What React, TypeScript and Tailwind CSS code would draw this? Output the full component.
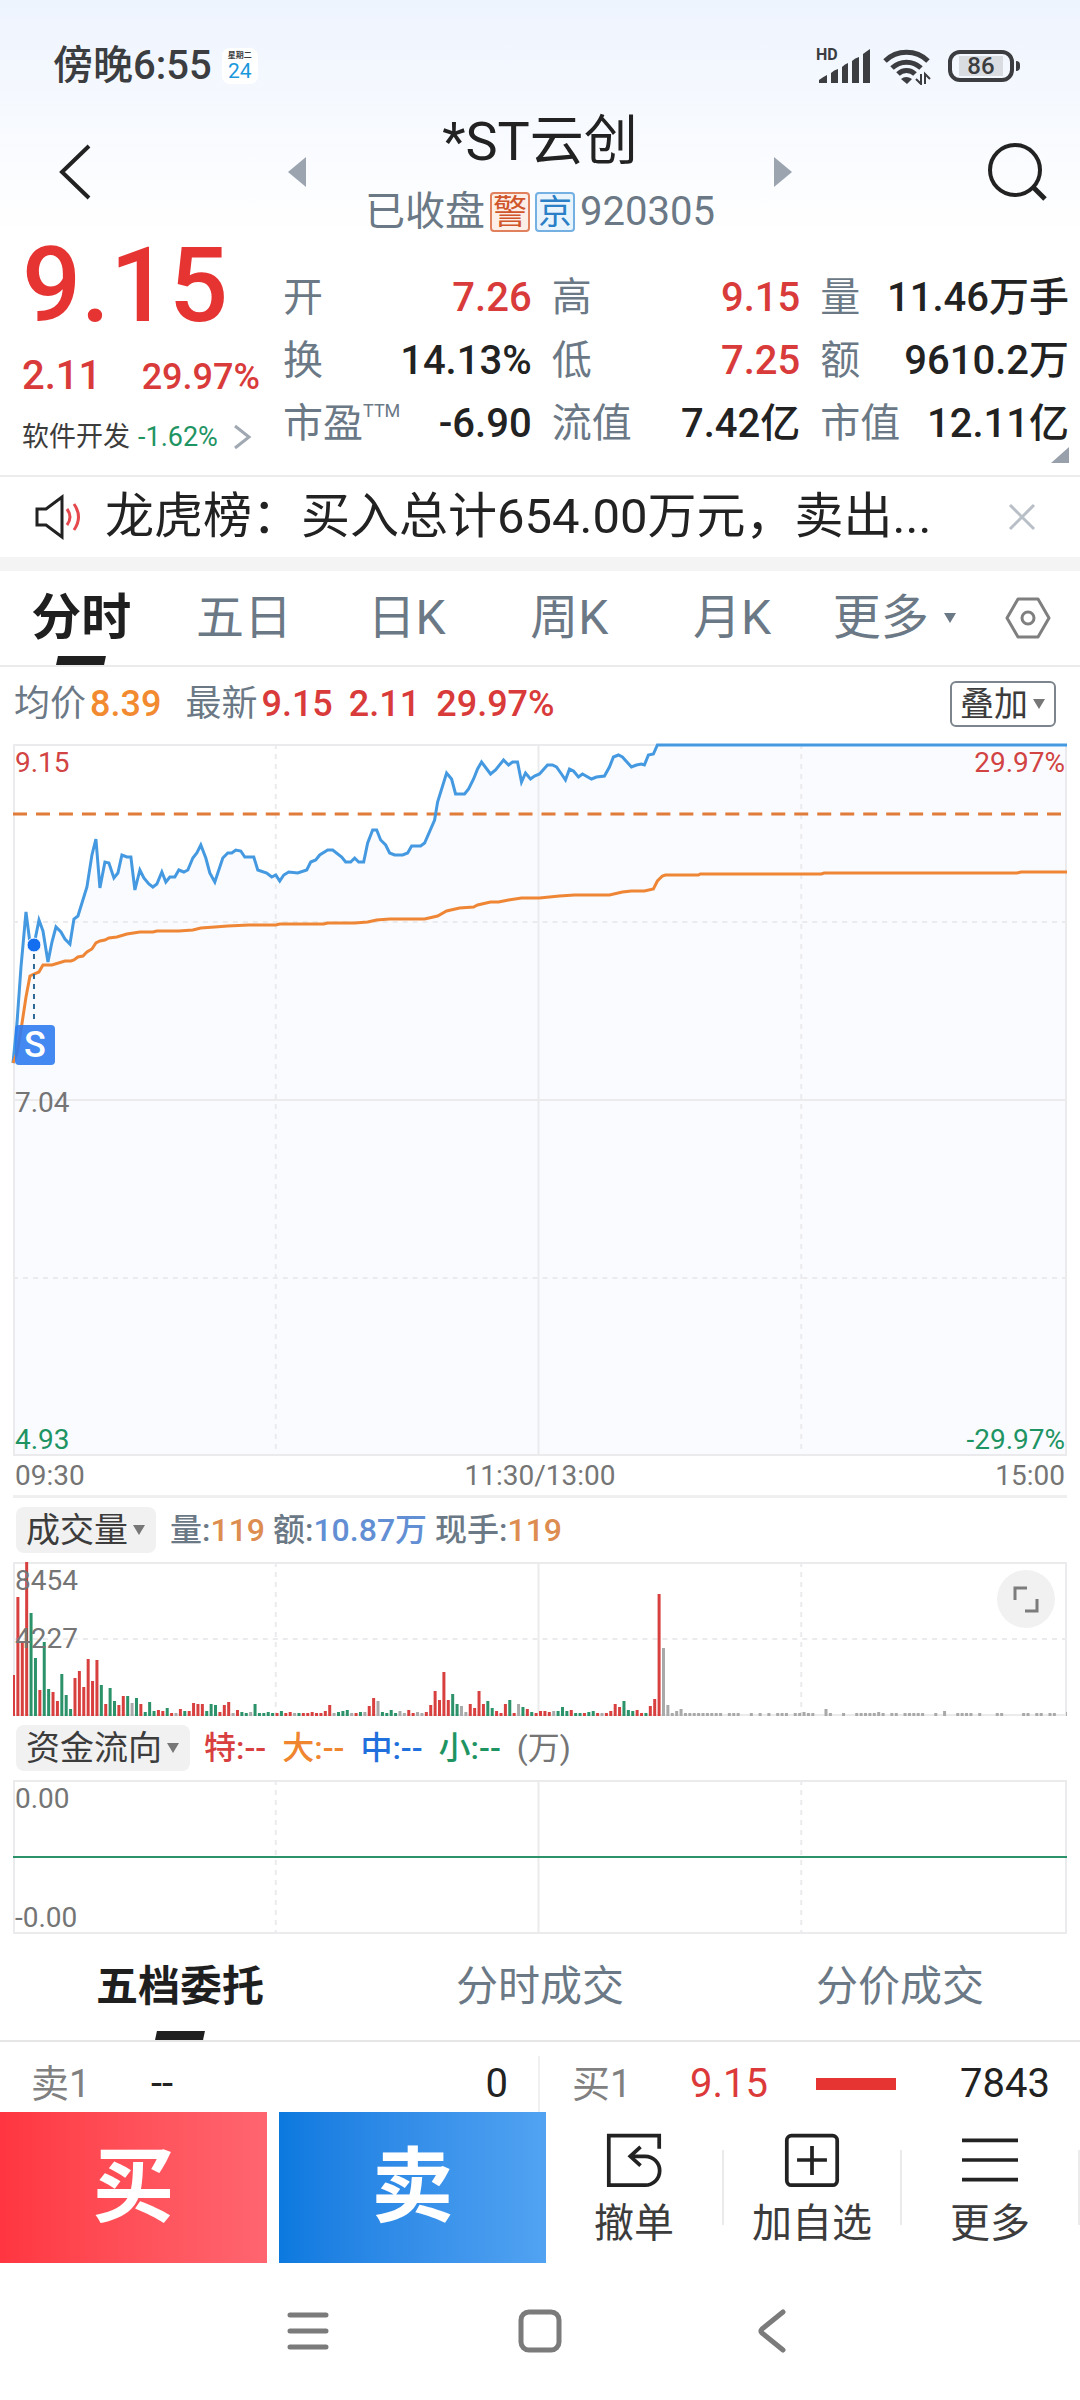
import type { ReactNode } from "react";
import clsx from "clsx";

interface Stat {
  label: string;
  note?: string;
  value: string;
  up?: boolean;
}

const stats: Stat[] = [
  { label: "开", value: "7.26", up: true },
  { label: "高", value: "9.15", up: true },
  { label: "量", value: "11.46万手" },
  { label: "换", value: "14.13%" },
  { label: "低", value: "7.25", up: true },
  { label: "额", value: "9610.2万" },
  { label: "市盈", note: "TTM", value: "-6.90" },
  { label: "流值", value: "7.42亿" },
  { label: "市值", value: "12.11亿" },
];

const periods = ["分时", "五日", "日K", "周K", "月K"];
const detailTabs = ["五档委托", "分时成交", "分价成交"];

// Chart space is 1055 x 712, one minute is about 4.4 wide
const CHART_W = 1055;

const priceLine =
  "0,319 4,279 8,223 13,168 17,199 21,201 26,176 30,187 35,218 39,198 43,183 48,188 52,195 57,200 61,175 65,172 74,143 79,111 83,95 87,144 92,118 96,119 101,134 105,129 109,111 114,113 118,113 122,146 127,126 131,134 136,140 140,143 144,140 149,128 153,138 157,133 162,133 166,126 171,128 175,126 180,114 184,109 188,101 193,114 197,129 202,138 210,114 215,109 219,109 223,106 228,107 232,113 241,113 245,126 254,129 259,133 263,131 267,137 271,131 276,128 285,129 294,126 298,118 303,116 307,111 315,106 320,106 329,113 333,118 338,118 342,114 346,118 351,118 355,99 360,86 364,86 368,96 373,101 377,109 382,111 390,111 395,109 399,102 408,102 412,99 422,76 425,58 434,29 439,35 443,50 452,50 456,45 461,35 465,25 469,18 478,30 483,26 491,16 496,21 500,18 505,18 509,38 513,29 518,35 522,32 527,30 535,21 540,21 544,23 549,30 553,36 557,25 561,27 566,33 570,30 579,35 584,33 592,32 597,23 601,13 606,11 610,13 619,23 624,21 629,20 632,21 636,11 641,10 645,1 1055,1";

const averageLine =
  "0,319 4,309 8,286 13,253 17,232 21,230 26,228 30,221 39,221 52,217 58,217 61,216 65,213 70,212 74,208 79,205 83,199 87,197 92,196 96,194 104,193 114,190 127,188 140,188 144,187 166,187 180,186 188,184 202,183 215,182 236,181 263,181 267,180 311,180 315,179 342,179 355,178 364,176 377,175 412,175 425,172 434,167 447,164 461,163 465,161 478,158 486,158 496,156 509,154 527,154 547,152 562,151 597,151 610,148 619,147 632,147 641,145 645,137 650,132 653,131 686,131 688,130 809,130 812,129 1005,129 1009,128 1055,128";

// One entry a minute: colour (r rise, g fall, x flat) and bar height
const morningVolume =
  "r41 r119 r75 r155 g103 g58 r26 g74 g27 r24 r15 g42 g21 g7 r38 r45 r29 r57 r35 r56 g31 r12 g28 g15 r11 r20 g20 x13 g18 r12 g4 g14 g5 r6 r5 g8 r3 x3 r7 g5 r5 r13 r12 r12 g5 g12 g11 r4 r11 r14 x3 r6 g4 g3 x4 g12 g3 g3 g4 g3 r3 g5 r3 r4 x3 g3 r3 r3 r4 r3 r3 r5 r11 x3 g4 g5 g6 x3 r3 g4 x4 r10 r18 x15 g4 g3 g6 g3 x5 x3 r6 r3 x4 x3 r4 r11 r25 r16 r44 r16 g22 g12 x10 x4 r12 r8 r25 r12 g15 g8 r5 r3 r12 g16 r3 x12 g9 r7 g4 r3";
const afternoonVolume =
  "r5 r5 r4 x5 g5 g9 g5 r6 g3 g3 r3 g4 g5 r3 x3 r3 r5 r12 r9 g15 g6 g5 r6 r3 g3 r10 r17 r122 x68 x11 x3 x5 x7 x3 x3 x3 x3 x3 x3 x3 x3 x3";
// Trades after the limit price was reached
const lateVolume: [number, number][] = [
  [163, 3], [164, 3], [165, 3], [168, 3], [170, 3], [172, 3], [174, 3], [175, 3], [176, 3], [178, 3],
  [179, 3], [180, 4], [181, 3], [182, 3], [185, 7], [186, 3], [189, 3], [192, 3], [193, 3], [194, 3],
  [195, 3], [196, 3], [197, 4], [198, 3], [200, 3], [201, 3], [203, 3], [204, 3], [205, 3], [206, 3],
  [207, 3], [210, 3], [212, 5], [215, 3], [216, 3], [217, 3], [218, 3], [220, 3], [224, 3], [225, 3],
  [230, 3], [231, 3], [233, 3], [234, 3], [236, 3], [237, 3], [240, 4],
];

const barColors: Record<string, string> = { r: "#d8403f", g: "#2b9269", x: "#a9a9a9" };

const volumeBars = [
  ...`${morningVolume} ${afternoonVolume}`.split(" ").map((entry, i) => ({
    minute: i,
    color: barColors[entry[0]],
    height: Number(entry.slice(1)),
  })),
  ...lateVolume.map(([minute, height]) => ({ minute, color: barColors.x, height })),
];

function Caret({ className }: { className?: string }) {
  return (
    <svg viewBox="0 0 14 12" className={clsx("h-3 w-3.5 shrink-0", className)} aria-hidden="true">
      <path d="M1 1h12L7 11z" fill="currentColor" />
    </svg>
  );
}

function Grid({ height, rows = [] }: { height: number; rows?: number[] }) {
  return (
    <g stroke="#ebebee" strokeWidth="2" fill="none">
      <path d={`M0 1H${CHART_W}M0 ${height - 1}H${CHART_W}M1 0V${height}M526 0V${height}M1054 0V${height}`} />
      <path d={`M263 0V${height}M789 0V${height}`} strokeDasharray="5 5" />
      {rows.map((y) => (
        <path key={y} d={`M0 ${y}H${CHART_W}`} strokeDasharray="5 5" />
      ))}
    </g>
  );
}

function StatusBar() {
  return (
    <div className="flex items-center justify-between pt-11 pr-[60px] pl-[53px] text-[#3b3d40]">
      <div className="flex items-center gap-2.5">
        <span className="text-[40px] leading-[44px] font-medium">傍晚6:55</span>
        <span className="flex h-9 w-9 flex-col items-center rounded-lg bg-white pt-1">
          <span className="text-[8px] leading-[8px] font-bold">星期二</span>
          <span className="text-[21px] leading-[22px] text-[#1a98dc]">24</span>
        </span>
      </div>
      <div className="flex items-center gap-3">
        <svg viewBox="0 0 54 36" className="h-9 w-[54px] overflow-visible" aria-label="HD signal">
          <text x="0" y="12" fontSize="16" fontWeight="700" fill="currentColor">
            HD
          </text>
          <path
            d="M3 32q4-3 8-5v8H3zM15 25q3-3 7-4v14h-7zM26 19q3-3 6-4v20h-6zM36 13q3-3 7-4v26h-7zM47 6q4-3 7-5v34h-7z"
            fill="currentColor"
          />
        </svg>
        <svg viewBox="0 0 50 38" className="h-[38px] w-[50px]" fill="none" stroke="currentColor" aria-label="Wi-Fi">
          <path d="M3 14a31 31 0 0 1 43 0M10 21a21 21 0 0 1 29 0M16 27a12 12 0 0 1 17 0" strokeWidth="5" />
          <path d="M19 32q5-4 11 0l-5 5z" fill="currentColor" stroke="none" />
          <path d="M39 27v10l-5-5M43 37V27l5 5" strokeWidth="2" />
        </svg>
        <div className="ml-1 flex items-center gap-0.5">
          <span className="flex h-8 w-[66px] items-center justify-center rounded-xl border-4 border-current">
            <span className="w-11 bg-[#d9dce1] text-center text-[24px] leading-5 font-medium">86</span>
          </span>
          <span className="h-2.5 w-1 rounded-r bg-current" />
        </div>
      </div>
    </div>
  );
}

function TitleBar() {
  return (
    <header className="flex items-center justify-between pt-6 pr-8 pl-14">
      <button aria-label="返回" className="w-20">
        <svg viewBox="0 0 36 56" className="h-14 w-9" fill="none" stroke="#222" strokeWidth="4">
          <path d="M33 2 6 28l27 26" />
        </svg>
      </button>
      <div className="flex w-[504px] items-center justify-between">
        <button aria-label="上一只">
          <svg viewBox="0 0 18 30" className="h-[30px] w-[18px]">
            <path d="M18 0v30L0 15z" fill="#9ba4af" />
          </svg>
        </button>
        <div className="text-center">
          <h1 className="text-[54px] leading-[60px] text-[#222]">*ST云创</h1>
          <div className="mt-5 flex items-center justify-center gap-[5px] text-[40px] leading-10 text-[#6b7885]">
            <span>已收盘</span>
            <span className="flex h-10 w-10 items-center justify-center rounded border-2 border-[#e0805c] bg-[#fdeee8] text-[34px] leading-9 text-[#d0552b]">
              警
            </span>
            <span className="flex h-10 w-10 items-center justify-center rounded border-2 border-[#74b0e2] bg-[#e9f4fd] text-[34px] leading-9 text-[#2a7fc6]">
              京
            </span>
            <span>920305</span>
          </div>
        </div>
        <button aria-label="下一只">
          <svg viewBox="0 0 18 30" className="h-[30px] w-[18px]">
            <path d="M0 0v30l18-15z" fill="#9ba4af" />
          </svg>
        </button>
      </div>
      <button aria-label="搜索" className="ml-6 flex w-20 justify-end">
        <svg viewBox="0 0 60 60" className="h-[60px] w-[60px]" fill="none" stroke="#222" strokeWidth="4">
          <circle cx="27" cy="28" r="25" />
          <path d="m45 45 12 12" strokeWidth="5" />
        </svg>
      </button>
    </header>
  );
}

function Quote() {
  return (
    <section className="relative flex pr-[11px] pb-5 pl-[22px]">
      <div className="w-[261px] shrink-0">
        <p className="text-[104px] leading-[108px] font-medium text-[#e63433]">9.15</p>
        <p className="mt-3.5 flex w-[238px] items-baseline justify-between text-[40px] leading-[44px] font-medium text-[#d93a3a]">
          <span>2.11</span>
          <span className="text-[36px]">29.97%</span>
        </p>
        <a href="#industry" className="mt-[22px] flex items-center text-[27px] leading-8 whitespace-nowrap text-[#3c3c3c]">
          软件开发
          <span className="ml-2 text-[#1f9463]">-1.62%</span>
          <svg viewBox="0 0 20 26" className="ml-3.5 h-[26px] w-5" fill="none" stroke="#a0a8b2" strokeWidth="3">
            <path d="m3 2 14 11L3 24" />
          </svg>
        </a>
      </div>
      <dl className="grid flex-1 grid-cols-3 gap-x-5 pt-[34px] text-[40px] leading-[63px]">
        {stats.map((stat) => (
          <div key={stat.label} className="flex justify-between whitespace-nowrap">
            <dt className="flex text-[#6b7885]">
              {stat.label}
              {stat.note && <span className="text-[18px] leading-[38px]">{stat.note}</span>}
            </dt>
            <dd className={clsx("font-medium", stat.up ? "text-[#d93a3a]" : "text-[#222]")}>{stat.value}</dd>
          </div>
        ))}
      </dl>
      <svg viewBox="0 0 18 16" className="absolute right-[11px] bottom-3 h-4 w-[18px]" aria-hidden="true">
        <path d="M18 0v16H0z" fill="#98a1ab" />
      </svg>
    </section>
  );
}

function Notice() {
  return (
    <div className="flex items-center border-t-2 border-[#ececec] py-[15px] pr-11 pl-[35px]">
      <svg viewBox="0 0 48 46" className="h-[46px] w-12 shrink-0" fill="none" strokeWidth="3">
        <path d="M2 15h9L27 3v40L11 31H2z" stroke="#222" />
        <path d="M32 15q6 8 0 16M39 10q9 13 0 26" stroke="#e5484d" />
      </svg>
      <p className="ml-[22px] flex-1 text-[49px] leading-[50px] whitespace-nowrap text-[#222]">
        龙虎榜：买入总计654.00万元，卖出...
      </p>
      <button aria-label="关闭">
        <svg viewBox="0 0 28 28" className="h-7 w-7" stroke="#b9bfc6" strokeWidth="3">
          <path d="m2 2 24 24M26 2 2 26" />
        </svg>
      </button>
    </div>
  );
}

function PeriodTabs() {
  return (
    <nav className="flex items-center border-b-2 border-[#ebebeb] pr-2.5 text-[48px] leading-[94px] text-[#6b7885]">
      {periods.map((period, i) => (
        <button
          key={period}
          className={clsx("relative flex-1 text-center", i === 0 && "text-[50px] font-bold text-[#1f1f1f]")}
        >
          {period}
          {i === 0 && <Underline />}
        </button>
      ))}
      <button className="flex flex-1 items-center justify-center gap-3.5 pr-2.5">
        更多
        <Caret />
      </button>
      <button aria-label="设置" className="flex w-[84px] justify-center">
        <svg viewBox="0 0 46 42" className="h-[42px] w-[46px]" fill="none" stroke="#7f7f7f" strokeWidth="3">
          <path d="M13 2h20l11 19-11 19H13L2 21z" strokeLinejoin="round" />
          <circle cx="23" cy="21" r="6" />
        </svg>
      </button>
    </nav>
  );
}

function Underline() {
  return (
    <span className="absolute bottom-0 left-1/2 h-[9px] w-12 -translate-x-1/2 -skew-x-12 bg-[#1f1f1f]" />
  );
}

function PriceSummary() {
  return (
    <div className="flex items-center justify-between pt-3.5 pr-6 pb-[17px] pl-3.5 text-[36px] leading-[46px]">
      <p className="flex text-[#6b7885]">
        均价
        <span className="ml-1 font-medium text-[#f28a30]">8.39</span>
        <span className="ml-6">最新</span>
        <span className="ml-1 font-medium text-[#d93a3a]">9.15</span>
        <span className="ml-4 font-medium text-[#d93a3a]">2.11</span>
        <span className="ml-4 font-medium text-[#d93a3a]">29.97%</span>
      </p>
      <button className="flex items-center gap-1 rounded-md border-2 border-[#7c858d] px-2 text-[34px] leading-[42px] text-[#3c3c3c]">
        叠加
        <Caret className="text-[#777]" />
      </button>
    </div>
  );
}

function PriceChart() {
  return (
    <div className="relative mx-[13px] text-[28px] leading-8 text-[#757575]">
      <svg viewBox={`0 0 ${CHART_W} 712`} preserveAspectRatio="none" className="h-[712px] w-full overflow-visible">
        <polygon points={`0,712 ${priceLine} 1055,712`} fill="#f9fbff" />
        <Grid height={712} rows={[178, 534]} />
        <path d="M0 356H1055" stroke="#ebebee" strokeWidth="2" />
        <path d="M0 70H1055" stroke="#e07b39" strokeWidth="3" strokeDasharray="14 9" />
        <polyline points={priceLine} fill="none" stroke="#4499e0" strokeWidth="3" />
        <polyline points={averageLine} fill="none" stroke="#ee8636" strokeWidth="3" />
        <circle cx="21" cy="201" r="7" fill="#146ff0" stroke="#fff" strokeWidth="1" />
        <path d="M21 210V276" stroke="#2f6a96" strokeWidth="2" strokeDasharray="5 5" />
      </svg>
      <span className="absolute top-[281px] left-0.5 flex h-10 w-10 items-center justify-center rounded bg-[#2f7cf0]/90 text-[36px] font-medium text-white">
        S
      </span>
      <span className="absolute top-[3px] left-0.5 text-[#d24343]">9.15</span>
      <span className="absolute top-[3px] right-0.5 text-[#d24343]">29.97%</span>
      <span className="absolute top-[343px] left-0.5">7.04</span>
      <span className="absolute bottom-0 left-0.5 text-[#1f9463]">4.93</span>
      <span className="absolute right-0.5 bottom-0 text-[#1f9463]">-29.97%</span>
    </div>
  );
}

function TimeAxis() {
  return (
    <div className="mx-[13px] grid grid-cols-3 border-b-[3px] border-[#efefef] px-0.5 text-[28px] leading-[39px] text-[#757575]">
      <span>09:30</span>
      <span className="text-center">11:30/13:00</span>
      <span className="text-right">15:00</span>
    </div>
  );
}

function IndicatorBar({ name, children }: { name: string; children: ReactNode }) {
  return (
    <div className="flex items-center px-4 py-[9px] text-[32px] leading-[46px] font-medium">
      <button className="mr-3.5 flex items-center gap-1 rounded-lg bg-[#f1f1f1] px-2.5 text-[34px] font-normal text-[#3c3c3c]">
        {name}
        <Caret className="text-[#777]" />
      </button>
      {children}
    </div>
  );
}

function VolumeChart() {
  return (
    <div className="relative mx-[13px] text-[28px] leading-8 text-[#757575]">
      <svg viewBox={`0 0 ${CHART_W} 154`} preserveAspectRatio="none" className="h-[154px] w-full">
        <Grid height={154} rows={[77]} />
        {volumeBars.map((bar) => (
          <rect
            key={bar.minute}
            x={bar.minute * 4.396 - 1}
            y={154 - bar.height}
            width="3"
            height={bar.height}
            fill={bar.color}
          />
        ))}
      </svg>
      <span className="absolute top-[3px] left-0.5">8454</span>
      <span className="absolute top-[61px] left-0.5">4227</span>
      <button
        aria-label="全屏"
        className="absolute top-2 right-3 flex h-[58px] w-[58px] items-center justify-center rounded-full bg-[#f1f1f1]"
      >
        <svg viewBox="0 0 28 28" className="h-7 w-7" fill="none" stroke="#7c7c7c" strokeWidth="3">
          <path d="M3 15V3h12M25 14v12H13" />
        </svg>
      </button>
    </div>
  );
}

function FundChart() {
  return (
    <div className="relative mx-[13px] text-[28px] leading-8 text-[#757575]">
      <svg viewBox={`0 0 ${CHART_W} 154`} preserveAspectRatio="none" className="h-[154px] w-full">
        <Grid height={154} />
        <path d="M0 77H1055" stroke="#2b9269" strokeWidth="2" />
      </svg>
      <span className="absolute top-[3px] left-0.5">0.00</span>
      <span className="absolute bottom-0 left-0.5">-0.00</span>
    </div>
  );
}

function DetailTabs() {
  return (
    <nav className="flex border-b-2 border-[#e6e6e6] text-[42px] leading-[106px] text-[#6b7885]">
      {detailTabs.map((tab, i) => (
        <button key={tab} className={clsx("relative flex-1 text-center", i === 0 && "font-bold text-[#1f1f1f]")}>
          {tab}
          {i === 0 && <Underline />}
        </button>
      ))}
    </nav>
  );
}

function OrderBook() {
  return (
    <div className="grid grid-cols-2 pt-3.5 text-[40px] leading-[56px] text-[#222]">
      <div className="flex border-r-2 border-[#f0f0f0] pr-[30px] pl-[31px]">
        <span className="w-[120px] text-[38px] text-[#808080]">卖1</span>
        <span>--</span>
        <span className="ml-auto">0</span>
      </div>
      <div className="flex items-center pr-[30px] pl-8">
        <span className="w-[118px] text-[38px] text-[#808080]">买1</span>
        <span className="text-[#dc3a3a]">9.15</span>
        <span className="ml-12 h-3 w-20 bg-[#e63433]" />
        <span className="ml-auto">7843</span>
      </div>
    </div>
  );
}

function ActionButton({ label, children }: { label: string; children: ReactNode }) {
  return (
    <button className="flex flex-1 flex-col items-center gap-2 pt-2 text-[40px] leading-[56px] text-[#3c3c3c]">
      <svg viewBox="0 0 60 60" className="h-14 w-14" fill="none" stroke="#222" strokeWidth="4">
        {children}
      </svg>
      {label}
    </button>
  );
}

function ActionBar() {
  return (
    <div className="flex text-[#222]">
      <button className="h-[151px] w-[267px] bg-linear-to-r from-[#ff3540] to-[#ff6570] text-[82px] font-bold text-white">
        买
      </button>
      <button className="ml-3 h-[151px] w-[267px] bg-linear-to-r from-[#0a79df] to-[#51a3f2] text-[82px] font-bold text-white">
        卖
      </button>
      <div className="flex flex-1 items-center">
        <ActionButton label="撤单">
          <path d="M57 18V4H3v53h39a15 15 0 0 0 0-31H27" />
          <path d="m37 16-11 10 11 10" />
        </ActionButton>
        <span className="h-[75px] w-0.5 bg-[#ebebeb]" />
        <ActionButton label="加自选">
          <rect x="3" y="4" width="54" height="53" rx="5" />
          <path d="M30 15v31M14 30h32" />
        </ActionButton>
        <span className="h-[75px] w-0.5 bg-[#ebebeb]" />
        <ActionButton label="更多">
          <path d="M0 9h60M0 30h60M0 51h60" />
        </ActionButton>
        <span className="h-[75px] w-0.5 bg-[#ebebeb]" />
      </div>
    </div>
  );
}

function SystemNav() {
  return (
    <div className="flex items-center justify-center gap-[188px] py-11">
      <button aria-label="最近任务">
        <svg viewBox="0 0 44 48" className="h-12 w-11" stroke="#7b7b7b" strokeWidth="5" strokeLinecap="round">
          <path d="M4 8h36M4 24h36M4 40h36" />
        </svg>
      </button>
      <button aria-label="主屏幕">
        <svg viewBox="0 0 44 48" className="h-12 w-11" fill="none" stroke="#7b7b7b" strokeWidth="5">
          <rect x="3" y="5" width="38" height="38" rx="8" />
        </svg>
      </button>
      <button aria-label="返回上级">
        <svg viewBox="0 0 44 48" className="h-12 w-11" fill="none" stroke="#7b7b7b" strokeWidth="5" strokeLinecap="round">
          <path d="M33 5 12 22q-2 2 0 4l21 17" strokeLinejoin="round" />
        </svg>
      </button>
    </div>
  );
}

export default function App() {
  return (
    <main className="min-h-screen bg-white font-[Roboto,'Noto_Sans_CJK_SC',sans-serif]">
      <div className="bg-linear-to-b from-[#eef4fe] to-white">
        <StatusBar />
        <TitleBar />
      </div>
      <Quote />
      <Notice />
      <div className="h-3.5 bg-[#f4f4f4]" />
      <PeriodTabs />
      <PriceSummary />
      <PriceChart />
      <TimeAxis />
      <IndicatorBar name="成交量">
        <p className="text-[#6b7885]">
          量:<span className="text-[#dd8d50]">119</span> 额:<span className="text-[#628fd4]">10.87万</span> 现手:
          <span className="text-[#dd8d50]">119</span>
        </p>
      </IndicatorBar>
      <VolumeChart />
      <IndicatorBar name="资金流向">
        <p className="flex gap-4">
          <span className="text-[#d8403f]">特:--</span>
          <span className="text-[#f08530]">大:--</span>
          <span className="text-[#1f6fdc]">中:--</span>
          <span className="text-[#1f9463]">小:--</span>
          <span className="font-normal text-[#757575]">(万)</span>
        </p>
      </IndicatorBar>
      <FundChart />
      <DetailTabs />
      <OrderBook />
      <ActionBar />
      <SystemNav />
    </main>
  );
}
